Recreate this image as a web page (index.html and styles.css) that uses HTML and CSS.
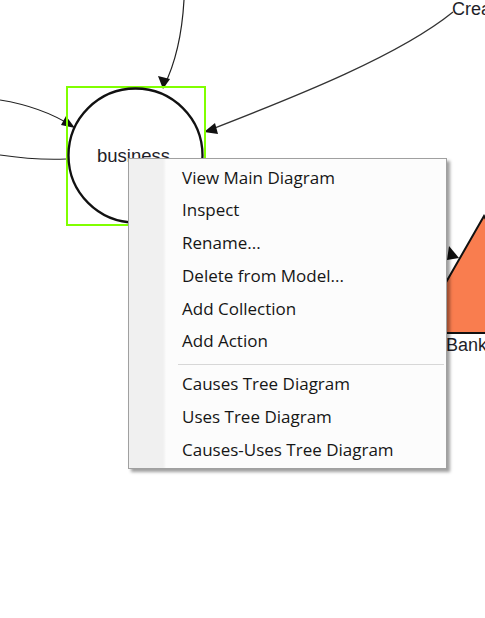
FILE: index.html
```html
<!DOCTYPE html>
<html>
<head>
<meta charset="utf-8">
<link rel="stylesheet" href="styles.css">
</head>
<body>
<div class="canvas">
  <svg class="diagram" width="485" height="618" viewBox="0 0 485 618" xmlns="http://www.w3.org/2000/svg">
    <!-- triangle node -->
    <polygon points="417,333 484,216 551,333" fill="#f97d4f" stroke="#111" stroke-width="2"/>
    <polygon points="449,246 459,258 447,260" fill="#111"/>
    <text x="446" y="351" class="lbl">Bank</text>
    <!-- edges -->
    <path d="M184,0 C182,35 176,62 164,86" fill="none" stroke="#222" stroke-width="1.2"/>
    <polygon points="163,89 158,76 170,79" fill="#111"/>
    <path d="M0,100 C25,104 50,112 72,126" fill="none" stroke="#222" stroke-width="1.2"/>
    <polygon points="75,128 61,125 66,116" fill="#111"/>
    <path d="M0,155 C20,158 40,160 66,159" fill="none" stroke="#222" stroke-width="1.2"/>
    <path d="M453,12 C400,55 300,95 207,131" fill="none" stroke="#333" stroke-width="1.3"/>
    <polygon points="204,132 215,123 218,134" fill="#111"/>
    <text x="452" y="15" class="lbl">Crea</text>
    <!-- business node -->
    <rect x="67" y="87" width="138" height="138" fill="none" stroke="#80ff00" stroke-width="2"/>
    <circle cx="135.5" cy="155.5" r="67" fill="#fff" stroke="#111" stroke-width="2.3"/>
    <text x="97" y="162" class="lbl biz">business</text>
  </svg>

  <div class="menu">
    <ul class="group">
      <li class="item">View Main Diagram</li>
      <li class="item">Inspect</li>
      <li class="item">Rename...</li>
      <li class="item">Delete from Model...</li>
      <li class="item">Add Collection</li>
      <li class="item">Add Action</li>
    </ul>
    <div class="sep"></div>
    <ul class="group">
      <li class="item">Causes Tree Diagram</li>
      <li class="item">Uses Tree Diagram</li>
      <li class="item">Causes-Uses Tree Diagram</li>
    </ul>
  </div>
</div>
</body>
</html>
```
FILE: styles.css
```css
html, body {
  margin: 0;
  padding: 0;
  background: #ffffff;
}
.canvas {
  position: relative;
  width: 485px;
  height: 618px;
  overflow: hidden;
  background: #ffffff;
}
.diagram {
  position: absolute;
  left: 0;
  top: 0;
}
.lbl {
  font-family: "Liberation Sans", Arial, sans-serif;
  font-size: 18px;
  fill: #1e1e28;
}
.biz {
  font-size: 18.5px;
}
.menu {
  position: absolute;
  left: 128px;
  top: 158px;
  width: 319px;
  box-sizing: border-box;
  border: 1px solid #a0a0a0;
  background: linear-gradient(to right, #f0f0f0 0, #f0f0f0 34px, #f7f7f7 36px, #fcfcfc 37px, #fcfcfc 100%);
  box-shadow: 3px 3px 3px rgba(0, 0, 0, 0.38);
  padding: 2.5px 0 1.5px 0;
  font-family: "Open Sans", "Noto Sans", sans-serif;
  font-size: 17px;
  color: #161616;
}
.group {
  list-style: none;
  margin: 0;
  padding: 0;
}
.item {
  height: 32.8px;
  line-height: 32.8px;
  padding-left: 53px;
  white-space: nowrap;
}
.sep {
  height: 1px;
  background: #d7d7d7;
  margin: 5.5px 2px 3.5px 49px;
}
```
